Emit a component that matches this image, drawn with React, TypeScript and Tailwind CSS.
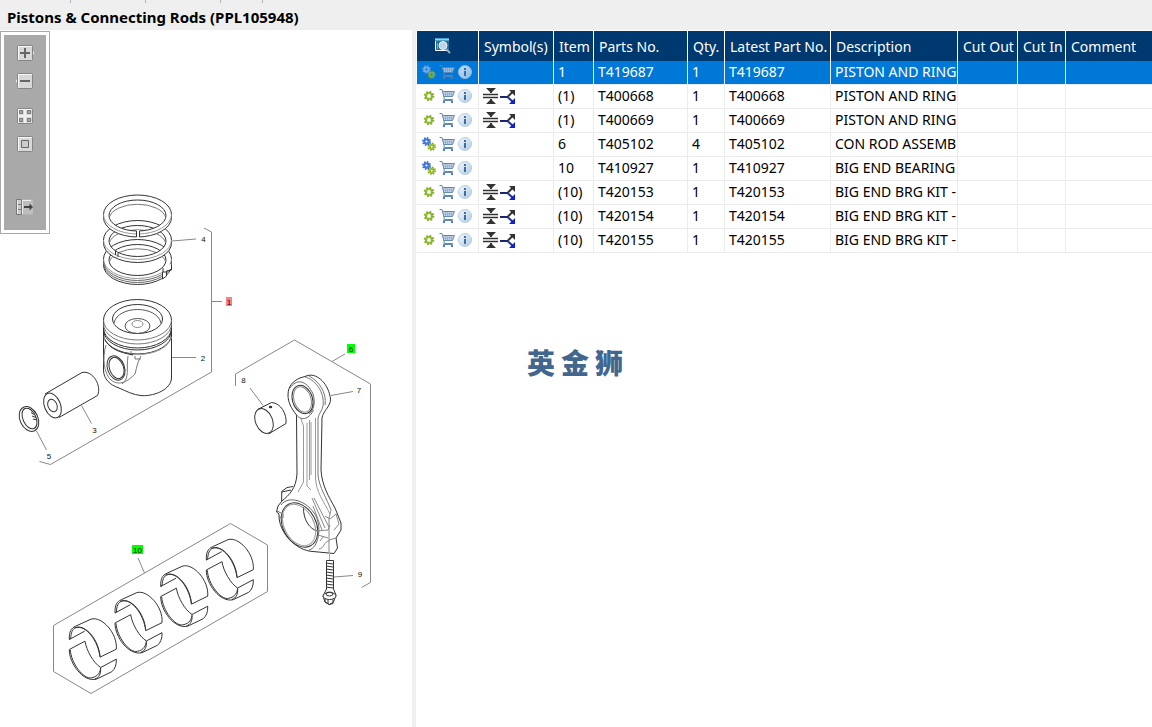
import { useState } from "react";
import type { ReactNode } from "react";

interface Part {
  id: number;
  assembly: boolean;
  alternative: boolean;
  item: string;
  partNo: string;
  qty: number;
  latest: string;
  description: string;
}

const parts: Part[] = [
  { id: 1, assembly: true, alternative: false, item: "1", partNo: "T419687", qty: 1, latest: "T419687", description: "PISTON AND RING" },
  { id: 2, assembly: false, alternative: true, item: "(1)", partNo: "T400668", qty: 1, latest: "T400668", description: "PISTON AND RING" },
  { id: 3, assembly: false, alternative: true, item: "(1)", partNo: "T400669", qty: 1, latest: "T400669", description: "PISTON AND RING" },
  { id: 4, assembly: true, alternative: false, item: "6", partNo: "T405102", qty: 4, latest: "T405102", description: "CON ROD ASSEMB" },
  { id: 5, assembly: true, alternative: false, item: "10", partNo: "T410927", qty: 1, latest: "T410927", description: "BIG END BEARING" },
  { id: 6, assembly: false, alternative: true, item: "(10)", partNo: "T420153", qty: 1, latest: "T420153", description: "BIG END BRG KIT -" },
  { id: 7, assembly: false, alternative: true, item: "(10)", partNo: "T420154", qty: 1, latest: "T420154", description: "BIG END BRG KIT -" },
  { id: 8, assembly: false, alternative: true, item: "(10)", partNo: "T420155", qty: 1, latest: "T420155", description: "BIG END BRG KIT -" },
];

const headers = ["Symbol(s)", "Item", "Parts No.", "Qty.", "Latest Part No.", "Description", "Cut Out", "Cut In", "Comment"];

export default function App() {
  const [selected, setSelected] = useState(1);

  return (
    <div className="flex min-h-screen flex-col bg-white font-['Noto_Sans','Noto_Sans_CJK_SC',sans-serif] text-sm text-black">
      {/* Title bar */}
      <header className="h-[30px] bg-[#efefef]">
        <div className="flex h-[3px]">
          <div className="w-[71px] border-r border-[#b4b4b4]"></div>
          <div className="w-[75px] border-r border-[#b4b4b4]"></div>
          <div className="w-[75px] border-r border-[#b4b4b4]"></div>
          <div className="w-[42px] border-r border-[#b4b4b4]"></div>
        </div>
        <h1 className="pl-[7px] pt-1 text-[15px] font-bold leading-5">Pistons &amp; Connecting Rods (PPL105948)</h1>
      </header>

      <main className="flex flex-1">
        {/* Drawing */}
        <section className="relative w-[412px] shrink-0">
          <Toolbar />
          <PistonDrawing />
        </section>

        <div className="w-1 shrink-0 bg-[#f0f0f0]"></div>

        {/* Parts list */}
        <section className="min-w-0 flex-1 pl-px pt-px">
          <table className="w-full table-fixed border-separate border-spacing-0">
            <colgroup>
              <col className="w-[62px]" />
              <col className="w-[75px]" />
              <col className="w-10" />
              <col className="w-[94px]" />
              <col className="w-[37px]" />
              <col className="w-[106px]" />
              <col className="w-[127px]" />
              <col className="w-[60px]" />
              <col className="w-12" />
              <col />
            </colgroup>
            <thead>
              <tr className="h-[30px] bg-[#003870] text-left text-white">
                <th className="border-r border-white p-0" aria-label="Actions">
                  <SearchIcon />
                </th>
                {headers.map((h) => (
                  <th key={h} className="whitespace-nowrap border-r border-white p-0 pl-[5px] pt-0.5 font-normal last:border-r-0">
                    {h}
                  </th>
                ))}
              </tr>
            </thead>
            <tbody>
              {parts.map((part) => (
                <PartRow key={part.id} part={part} active={part.id === selected} onSelect={() => setSelected(part.id)} />
              ))}
            </tbody>
          </table>

          <div className="ml-[110px] mt-[90px] flex gap-1.5 text-[28px] font-black leading-10 text-[#42678f]">
            <span>英</span>
            <span>金</span>
            <span>狮</span>
          </div>
        </section>
      </main>
    </div>
  );
}

const PartRow = ({ part, active, onSelect }: { part: Part; active: boolean; onSelect: () => void }) => {
  const cell = "whitespace-nowrap border-b border-r border-[#ececec] p-0 pb-0.5 pl-1 last:border-r-0";

  return (
    <tr onClick={onSelect} className={active ? "h-6 bg-[#0078d7] text-white" : "h-6"}>
      <td className={cell}>
        <div className={active ? "flex items-center gap-[3px] pl-px opacity-80" : "flex items-center gap-[3px] pl-px"}>
          <button type="button" aria-label="Part type" className="block">
            {part.assembly ? <GearsIcon pale={active} /> : <GearIcon />}
          </button>
          <button type="button" aria-label="Add to cart" className="block">
            <CartIcon />
          </button>
          <button type="button" aria-label="Information" className="block">
            <InfoIcon />
          </button>
        </div>
      </td>
      <td className={cell}>{part.alternative && <AlternativeIcon />}</td>
      <td className={cell}>{part.item}</td>
      <td className={cell}>{part.partNo}</td>
      <td className={cell}>{part.qty}</td>
      <td className={cell}>{part.latest}</td>
      <td className={cell}>{part.description}</td>
      <td className={cell}></td>
      <td className={cell}></td>
      <td className={cell}></td>
    </tr>
  );
};

/* ---------- Toolbar ---------- */

const Toolbar = () => (
  <div className="absolute left-0 top-px w-[50px] border border-[#a9a9a9] bg-white p-[3px]">
    <div className="flex h-[195px] flex-col items-center bg-[#a9a9a9] pt-2">
      <ToolButton label="Zoom in">
        <path d="M17 7.5l2 2.5-2 2.5" fill="#d8d8d8" stroke="#eee" />
        <Plate />
        <path d="M5 10h10M10 5v10" stroke="#666" strokeWidth="2" />
      </ToolButton>
      <ToolButton label="Zoom out">
        <path d="M3 7.5L1 10l2 2.5" fill="#d8d8d8" stroke="#eee" />
        <Plate />
        <path d="M5 10h10" stroke="#666" strokeWidth="2" />
      </ToolButton>
      <div className="h-[7px]"></div>
      <ToolButton label="Show all">
        <Plate />
        <path d="M4.5 4.5h3v3h-3zM12.5 4.5h3v3h-3zM4.5 12.5h3v3h-3zM12.5 12.5h3v3h-3z" fill="#aaa" stroke="#777" />
        <path d="M10 3v14M3 10h14" stroke="#f0f0f0" strokeWidth="2" />
      </ToolButton>
      <ToolButton label="Fit">
        <Plate />
        <path d="M6.5 6.5h7v7h-7z" fill="#ccc" stroke="#666" />
      </ToolButton>
      <div className="h-[35px]"></div>
      <ToolButton label="Move panel">
        <path d="M2 2.5h16v15H2z" fill="#bdbdbd" />
        <path d="M1.5 2.5h5v15h-5z" fill="#ccc" stroke="#777" />
        <path d="M2 7.5h4M2 12.5h4" stroke="#777" />
        <path d="M2.5 3v14M7.5 3v14M8 3.5h8" stroke="#eee" />
        <path d="M9 10h8" stroke="#444" strokeWidth="2" />
        <path d="M14.500 6.500L18 10l-3.500 3.500z" fill="#444" />
      </ToolButton>
    </div>
  </div>
);

const ToolButton = ({ label, children }: { label: string; children: ReactNode }) => (
  <button type="button" aria-label={label} className="flex h-7 w-7 items-center justify-center pb-2">
    <svg width="20" height="20" viewBox="0 0 20 20" fill="none">
      {children}
    </svg>
  </button>
);

const Plate = () => (
  <>
    <rect x="2.500" y="2.500" width="15" height="15" rx="1" fill="#d8d8d8" stroke="#858585" />
    <path d="M3.500 16.500v-13h13" stroke="#f8f8f8" />
  </>
);

/* ---------- Table icons ---------- */

const SearchIcon = () => (
  <svg width="16" height="16" viewBox="0 0 16 16" fill="none" className="ml-[18px] block">
    <path d="M0 0h14v13H0z" fill="#1b6d9b" />
    <path d="M.5 3v9.500h12" stroke="#fff" />
    <path d="M0 1.500h14" stroke="#8fd3ee" strokeWidth="2" />
    <path d="M2.500 5v6" stroke="#54b9de" strokeWidth="1" />
    <circle cx="8" cy="7.500" r="4" fill="#bdd3e6" stroke="#eef3f7" />
    <path d="M11 11l4 4" stroke="#9ab2c7" strokeWidth="2" />
  </svg>
);

const Gear = ({ cx, cy, r, color, edge }: { cx: number; cy: number; r: number; color: string; edge: string }) => (
  <g>
    <circle cx={cx} cy={cy} r={r} stroke={edge} strokeWidth="2" strokeDasharray={`${(r * 2 * Math.PI) / 16}`} />
    <circle cx={cx} cy={cy} r={r - 1.3} stroke={color} strokeWidth="2.200" />
  </g>
);

const GearIcon = () => (
  <svg width="14" height="16" viewBox="0 0 14 16" fill="none">
    <Gear cx={7} cy={8} r={4.3} color="#8cbb2c" edge="#82ad2b" />
  </svg>
);

const GearsIcon = ({ pale }: { pale: boolean }) => (
  <svg width="14" height="16" viewBox="0 0 14 16" fill="none">
    <Gear cx={4.5} cy={5.5} r={3.5} color={pale ? "#8db4ee" : "#3f78dc"} edge={pale ? "#6e9fe6" : "#3569c7"} />
    <Gear cx={9.7} cy={10.7} r={3.3} color="#94bd26" edge="#789e22" />
  </svg>
);

const CartIcon = () => (
  <svg width="16" height="16" viewBox="0 0 16 16" fill="none">
    <path d="M3 3.500h12l-1.500 5.500H5z" fill="#c3d3e5" />
    <path d="M.5 1.500h2.500L5.500 11.500h8.500M3.500 3.500h12L13.500 8.500H5" stroke="#6288b5" />
    <path d="M6.500 4v4.500M8.500 4v4.500M10.500 4v4.500M12.500 4v4.500M4 6h11" stroke="#86a4c8" strokeWidth=".6" />
    <path d="M4.500 11.500v1h9" stroke="#6288b5" />
    <circle cx="5" cy="14" r="1.200" fill="#5880ae" />
    <circle cx="13" cy="14" r="1.200" fill="#5880ae" />
  </svg>
);

const InfoIcon = () => (
  <svg width="14" height="16" viewBox="0 0 14 16">
    <defs>
      <linearGradient id="info" x1="0" y1="0" x2="1" y2="1">
        <stop offset="0" stopColor="#f4f9fd" />
        <stop offset="1" stopColor="#aecbe5" />
      </linearGradient>
    </defs>
    <circle cx="7" cy="8" r="6.500" fill="url(#info)" stroke="#b3cce4" />
    <path d="M6 4h2v2H6zM6 7h2v5H6z" fill="#3f6ca6" />
  </svg>
);

const AlternativeIcon = () => (
  <svg width="33" height="16" viewBox="0 0 33 16" fill="none">
    <path d="M3 0h10L8 5zM3 16h10L8 11z" fill="#333" />
    <path d="M8 0v5M8 11v5" stroke="#333" strokeWidth="2" />
    <path d="M0 6.500h15M0 9.500h15" stroke="#333" strokeWidth="1.600" />
    <path d="M17 9h8" stroke="#1e2470" strokeWidth="2" />
    <path d="M25 8.500l5-5" stroke="#333" strokeWidth="2" />
    <path d="M25 9.500l5 4.500" stroke="#1a2a9a" strokeWidth="2" />
    <path d="M26 2h6v6z" fill="#333" />
    <path d="M32 10v6h-6z" fill="#1020d8" />
  </svg>
);

/* ---------- Exploded drawing ---------- */

const Ring = ({ cy, layers = 1 }: { cy: number; layers?: number }) => {
  const t = layers === 1 ? 3 : 6;
  return (
    <g>
      <path
        fillRule="evenodd"
        fill="#fff"
        d={`M103.500 ${cy}A34 19.500 0 0 1 171.500 ${cy}v${t}A34 19.500 0 0 1 103.500 ${cy + t}zM109 ${cy + 1}A28.500 15.500 0 0 0 166 ${cy + 1}A28.500 15.500 0 0 0 109 ${cy + 1}z`}
      />
      <path d={`M109.300 ${cy + 3}A28.500 15.500 0 0 1 165.700 ${cy + 3}`} stroke="#777" />
      <path d={`M103.500 ${cy}A34 19.500 0 0 0 171.500 ${cy}`} stroke="#999" />
      {layers > 1 && (
        <path d={`M103.500 ${cy + 2}A34 19.500 0 0 0 171.500 ${cy + 2}M103.500 ${cy + 4}A34 19.500 0 0 0 171.500 ${cy + 4}`} stroke="#666" />
      )}
    </g>
  );
};

// Upper and lower half of one bearing, drawn at three times its size
const BearingShell = ({ x, y }: { x: number; y: number }) => (
  <g transform={`translate(${x} ${y}) scale(.3333)`} strokeWidth="3">
    <path d="M1 63C0 40 6 29 20 23L66 2C98-8 146 44 142 92L93 116C88 68 50 17 20 28C10 32 6 42 5 60z" />
    <path d="M1 63L47 38M16 28C50 14 90 66 93 114" />
    <path d="M1 93L48 68C52 96 74 134 95 147L142 122C143 140 137 153 128 160L82 182C42 192 0 134 1 93z" />
    <path d="M4 94C6 134 44 184 68 178C88 174 94 160 95 147M95 150C96 166 90 178 78 181" />
  </g>
);

const Callout = ({ x, y, children }: { x: number; y: number; children: ReactNode }) => (
  <text x={x} y={y} textAnchor="middle" fontSize="8" fill="#111" stroke="none" className="font-['Liberation_Sans',sans-serif]">
    {children}
  </text>
);

const PistonDrawing = () => (
  <svg viewBox="0 30 412 697" fill="none" stroke="#333" strokeWidth="1" className="block w-full" role="img" aria-label="Pistons and connecting rods">
    {/* brackets and leader lines */}
    <g stroke="#888">
      <path d="M204 228L211.500 232V372L50.500 464.500L39.500 461.500" />
      <path d="M172 241L196 239M211.500 301.500H222M172 357.500H196M81.500 405.500L91.500 423.500M36.500 431L46.500 450" />
      <path d="M235.500 386V374L294.500 340L370.500 384V582.500L361.500 587.500" />
      <path d="M332 361.500L345 354M250 388L263 405.500M331 395.500L353 391.500M334 577L353 575.500" />
      <path d="M53.500 625.500L230.500 523.500L267.500 545V591.500L91 693.500L53.500 671.500zM138 558L144.500 573" />
    </g>

    {/* rings */}
    <Ring cy={259} layers={2} />
    <path d="M162 275v5l4-2v-7l5-2v-5l-6 2z" fill="#fff" stroke="none" />
    <path d="M162.500 272v7l4-3v-5l5-1v-5M163 268v4h3" />
    <Ring cy={240} />
    <path d="M115.500 251v4M118 253v4" />
    <Ring cy={214.500} />
    <path d="M136.500 230h3v8h-3z" fill="#fff" stroke="none" />
    <path d="M136.500 231v6M139.500 231v6" />

    {/* piston */}
    <path d="M103.500 320A34 20.500 0 0 1 171.500 320V378C171 389 156 396 142 395.700C133 395 126 391 119 388C110 385 103.500 379 103.500 370z" fill="#fff" />
    <path d="M103.500 320A34 20 0 0 0 171.500 320M103.500 324A34 20 0 0 0 171.500 324" stroke="#777" />
    <path d="M103.500 328A34 20 0 0 0 171.500 328M103.500 330A34 20 0 0 0 171.500 330M103.500 334A34 20 0 0 0 171.500 334" />
    <path d="M104 337A34 20 0 0 0 171.500 337" stroke="#999" />
    <ellipse cx="137.500" cy="319" rx="25" ry="14.500" />
    <path d="M114 323C118 305 157 305 161 323" stroke="#555" />
    <ellipse cx="137.500" cy="326" rx="12.500" ry="7.500" stroke="#555" />
    <ellipse cx="137.500" cy="324" rx="5.500" ry="3.500" stroke="#888" />
    <ellipse cx="116" cy="368" rx="8.500" ry="12.500" transform="rotate(-20 116 368)" />
    <ellipse cx="116.500" cy="368" rx="7" ry="11" transform="rotate(-20 116.500 368)" />
    <path d="M106 345C102 358 104 374 111 380C121 388 131 378 135 374C137 366 138 361 141 356M128 356C126 369 130 378 122 384M131 355v-4M135 356v3h6" stroke="#777" />
    <path d="M105 340C109 347 117 352 133 355" />

    {/* pin */}
    <path d="M45 394L82 372.500C93 370 102 386 97.500 395.500L59 417.500" />
    <ellipse cx="52.500" cy="405.500" rx="8" ry="13" transform="rotate(-22 52.500 405.500)" />
    <ellipse cx="52.500" cy="405.500" rx="4.500" ry="6.500" transform="rotate(-22 52.500 405.500)" />

    {/* circlip */}
    <ellipse cx="29" cy="419" rx="9" ry="13" transform="rotate(-25 29 419)" />
    <ellipse cx="29.500" cy="418.500" rx="6.500" ry="11" transform="rotate(-25 29.500 418.500)" />
    <path d="M31 412.500l3 2M32 416l4 1.500M33 419l4 1" />

    {/* bush */}
    <path d="M257.500 409.500L271.500 402.500C281 403 287 414 286 423.500L268.500 434" />
    <ellipse cx="264" cy="421" rx="8.500" ry="13" transform="rotate(-22 264 421)" />
    <ellipse cx="270.500" cy="407" rx="1" ry=".5" strokeWidth="1.500" />

    {/* connecting rod */}
    <path d="M296.500 415C291 408 288 402 288 395C288 386 293 381 300 378L308 375.500C318 373 329 385 330.500 399C331 406 323 411 322 418L321 470C322 486 329 497 335 508L341 523V530L336 538L337.500 548L334 553.500L313 551.500C297 551 278 533 279 514L276.500 512L278 506L282 501C289 495 296 489 297 474z" fill="#fff" />
    <path d="M296.500 415C302 422 310 418 313.500 410M290 388C296 379 306 379 313 394C316 404 313 411 309 414" stroke="#666" />
    <ellipse cx="302.500" cy="399.500" rx="10" ry="14.500" transform="rotate(-18 302.500 399.500)" />
    <ellipse cx="302.500" cy="399.500" rx="8.500" ry="13" transform="rotate(-18 302.500 399.500)" stroke="#888" />
    <path d="M305 377C314 379 325 391 323 406C322 411 319 413 318 418V475C319 487 327 499 331 510M309 376C319 381 327 393 325 405" stroke="#777" />
    <path d="M301 419L303.500 426V482L298 492M307 423V486L311 490M309.500 420V480M311 422V475M315.500 418V478C316 492 324 502 330 514" stroke="#999" />
    <path d="M281.700 501V491.500L287 487.500L293 486.500M282 492L291 490" />
    <ellipse cx="299.500" cy="525" rx="16.500" ry="23.500" transform="rotate(-28 299.500 525)" />
    <path d="M281 505C288 495 307 500 316 516C322 529 318 548 309 550M277 511l6 3v4l-4-1" stroke="#666" />
    <path d="M303.500 507C303 520 310 529 317 531" />
    <ellipse cx="299" cy="525" rx="14.800" ry="22" transform="rotate(-28 299 525)" stroke="#999" />
    <path d="M312 498L325 528M314 498L329 527M313 506L322 530M331 510L329 518V552M325 516L330 519L336 514M317 531L328 530L330 525M318 535L328 538M336 538L329 540M320 541l4-5M319 549C324 549 324 541 329 541M336 514L339 524L334 530" stroke="#888" />

    {/* bolt */}
    <path d="M329.500 553v7" stroke="#aaa" />
    <path d="M326.500 560.500h7V589L336 595L333.500 602L329.500 604.500L325 602L323 596L326.500 589z" fill="#fff" />
    <path d="M326 563l7 1M326 566l7 1M326 569l7 1M326 572l7 1M326 575l7 1M326 578l7 1M326 581l7 1M326 584l7 1M326 587l7 1" />
    <ellipse cx="329.500" cy="596" rx="6.500" ry="3.500" fill="#fff" />
    <ellipse cx="329.500" cy="594" rx="3.500" ry="2" />
    <path d="M325 599v3l4 2.500l4-1v-4M328 600v3" />

    {/* big end bearings */}
    <BearingShell x={69} y={618.500} />
    <BearingShell x={114.700} y={592} />
    <BearingShell x={160.400} y={565.500} />
    <BearingShell x={206} y={539} />

    <Callout x={203.500} y={241.500}>4</Callout>
    <Callout x={203} y={360.500}>2</Callout>
    <Callout x={94.500} y={432.500}>3</Callout>
    <Callout x={49} y={458.500}>5</Callout>
    <Callout x={243.500} y={383}>8</Callout>
    <Callout x={359} y={393}>7</Callout>
    <Callout x={360} y={577}>9</Callout>

    <rect x="226" y="297" width="6" height="9" fill="#ff7f7f" stroke="none" />
    <Callout x={229} y={304.500}>1</Callout>
    <rect x="347" y="344" width="8" height="9" fill="#00ff00" stroke="none" />
    <Callout x={351} y={352}>6</Callout>
    <rect x="132" y="545" width="11" height="9" fill="#00ff00" stroke="none" />
    <Callout x={137.500} y={552.500}>10</Callout>
  </svg>
);
